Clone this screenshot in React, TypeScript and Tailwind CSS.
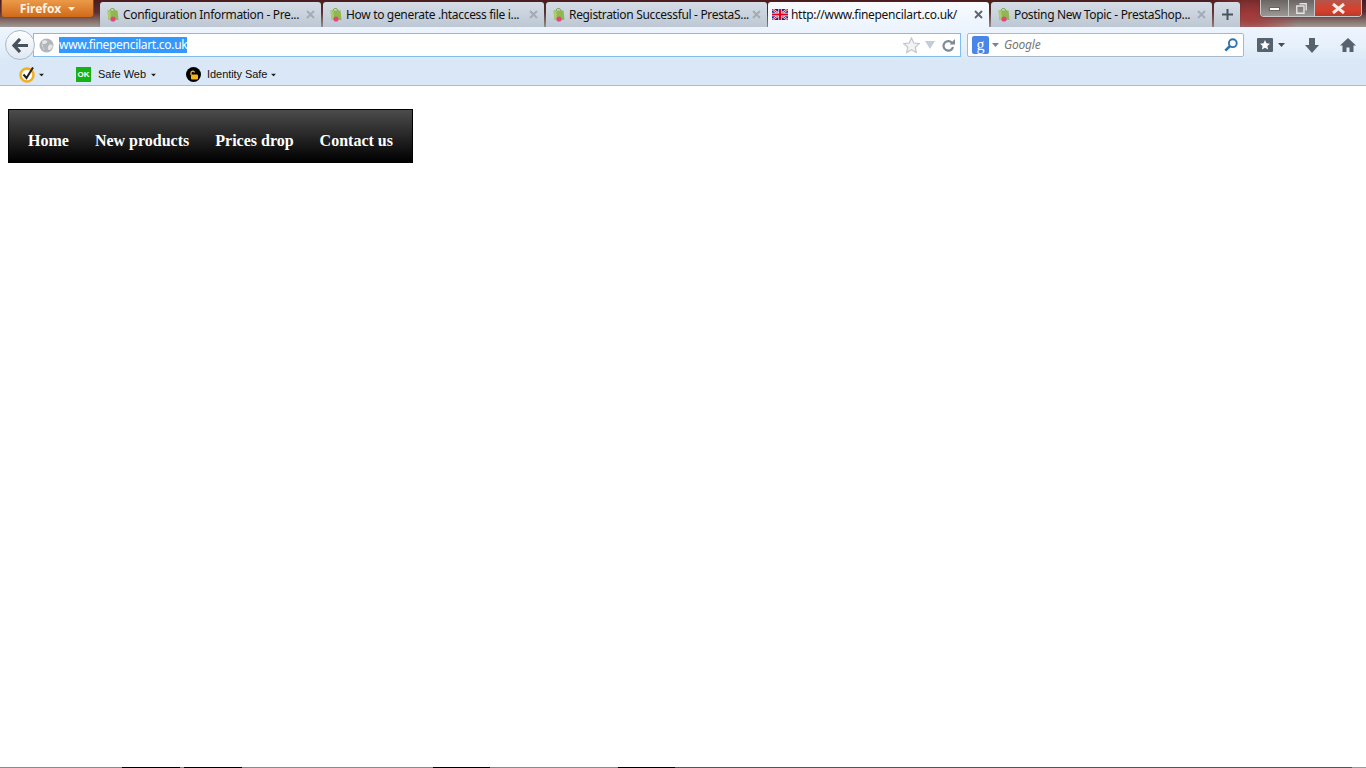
const uiFont = "font-['Noto_Sans',sans-serif]";

function Caret({ className = "" }: { className?: string }) {
  return (
    <svg width="7" height="4" viewBox="0 0 7 4" className={className}>
      <path d="M0 0h7L3.5 4z" fill="currentColor" />
    </svg>
  );
}

function BagIcon() {
  return (
    <svg width="13" height="15" viewBox="0 0 13 15" className="shrink-0">
      <path d="M4 4C4 .8 8.500 .5 9 4" fill="none" stroke="#6f9a3a" strokeWidth="1" />
      <path d="M1.500 3.500h10l1 9.500H2.500z" fill="#8fb84e" />
      <path d="M1.500 3.500h3l.5 9.500H2.500z" fill="#a9cc6c" />
      <circle cx="7" cy="12" r="2.600" fill="#e0457e" />
    </svg>
  );
}

function UkFlag() {
  return (
    <svg width="16" height="11" viewBox="0 0 16 11" className="shrink-0">
      <rect width="16" height="11" fill="#20208a" />
      <path d="M0 0 16 11M16 0 0 11" stroke="#fff" strokeWidth="2.200" />
      <path d="M0 0 16 11M16 0 0 11" stroke="#e0001c" strokeWidth="1" />
      <path d="M8 0v11M0 5.500h16" stroke="#fff" strokeWidth="3.400" />
      <path d="M8 0v11M0 5.500h16" stroke="#e0001c" strokeWidth="2.200" />
    </svg>
  );
}

function CloseX({ active }: { active?: boolean }) {
  return (
    <svg width="9" height="9" viewBox="0 0 9 9" className="shrink-0">
      <path d="M1 1l7 7M8 1 1 8" stroke={active ? "#5f666e" : "#a3abb5"} strokeWidth="1.900" />
    </svg>
  );
}

const tabs = [
  { title: "Configuration Information - Pre..." },
  { title: "How to generate .htaccess file i..." },
  { title: "Registration Successful - PrestaS..." },
  { title: "http://www.finepencilart.co.uk/", active: true },
  { title: "Posting New Topic - PrestaShop..." },
];

function Tab({ title, active }: { title: string; active?: boolean }) {
  if (active) {
    return (
      <div className="-ml-px flex h-[25px] w-[221px] items-center rounded-t-[3px] bg-[linear-gradient(#f9fbfe,#ecf4fe)] pl-[4px] pr-[6px] shadow-[0_0_1px_#333]">
        <UkFlag />
        <span className="ml-[3px] flex-1 whitespace-nowrap text-[12px] tracking-[-0.3px] text-[#111]">{title}</span>
        <CloseX active />
      </div>
    );
  }
  return (
    <div className="flex h-[25px] w-[221px] items-center rounded-t-[3px] bg-[linear-gradient(#d5dde6,#bdc8d4)] pl-[6px] pr-[6px] shadow-[0_0_1px_#333]">
      <BagIcon />
      <span className="ml-[4px] flex-1 whitespace-nowrap text-[12px] tracking-[-0.33px] text-[#111]">{title}</span>
      <CloseX />
    </div>
  );
}

function TitleBar() {
  return (
    <div className="flex h-[27px] bg-[radial-gradient(ellipse_50px_30px_at_1250px_16px,#a53a3a,transparent),linear-gradient(#4c1c1e_0%,#5c3032_45%,#a09a94_100%)]">
      <div className="ml-px flex h-[18px] w-[93px] items-center justify-center gap-[7px] rounded-b-[3px] border border-t-0 border-[#8a4a1a] bg-[linear-gradient(#eb9a4a,#d06a18)]">
        <span className="text-[12px] font-bold leading-none text-[#fdf3e6]">Firefox</span>
        <Caret className="text-[#fdf3e6]" />
      </div>
      <div className="ml-[6px] mt-[2px] flex gap-[2px]">
        {tabs.map((t) => (
          <Tab key={t.title} title={t.title} active={t.active} />
        ))}
        <div className="flex h-[25px] w-[26px] items-center justify-center rounded-t-[3px] bg-[linear-gradient(#d5dde6,#bdc8d4)] shadow-[0_0_1px_#333]">
          <svg width="11" height="11" viewBox="0 0 11 11">
            <path d="M5.500 0v11M0 5.500h11" stroke="#4a545e" strokeWidth="2" />
          </svg>
        </div>
      </div>
      <div className="ml-auto mr-[4px] flex h-[17px] w-[102px] overflow-hidden rounded-b-[4px] border border-t-0 border-[#c8c8c8] shadow-[0_0_1px_#222]">
        <div className="flex w-[28px] items-center justify-center border-r border-[#c8c8c8] bg-[linear-gradient(#6a6462,#9c9896)]">
          <div className="mt-[2px] h-[4px] w-[11px] border border-[#666] bg-white" />
        </div>
        <div className="flex w-[26px] items-center justify-center border-r border-[#c8c8c8] bg-[linear-gradient(#6a6462,#9c9896)]">
          <svg width="11" height="11" viewBox="0 0 11 11">
            <path d="M3.500 .8h6.700v6.700M.8 3h7.200v7.200H.8z" fill="none" stroke="#e4e4e4" strokeWidth="1.400" />
          </svg>
        </div>
        <div className="flex flex-1 items-center justify-center bg-[linear-gradient(#b4554c,#d8402a_60%,#b83a2c)]">
          <svg width="15" height="11" viewBox="0 0 15 11">
            <path d="M2 1l11 9M13 1 2 10" stroke="#f4ece8" strokeWidth="3" />
          </svg>
        </div>
      </div>
    </div>
  );
}

function NavBar() {
  return (
    <div className="flex h-[33px] items-center pr-[10px] pt-[3px]">
      <div className="relative z-10 ml-[5px] flex h-[30px] w-[30px] shrink-0 items-center justify-center rounded-full border border-[#a9b8c9] bg-[linear-gradient(#fdfeff,#e0e8f2)]">
        <svg width="17" height="15" viewBox="0 0 17 15">
          <path d="M8 1 2 7.500 8 14M2.500 7.500H16" fill="none" stroke="#48525c" strokeWidth="3.200" />
        </svg>
      </div>
      <div className="-ml-[2px] flex h-[24px] w-[928px] items-center border border-[#7fbcef] bg-white pl-[5px] pr-[5px]">
        <svg width="15" height="15" viewBox="0 0 15 15" className="shrink-0">
          <circle cx="7.500" cy="7.500" r="7" fill="#b2b6ba" />
          <path d="M3 3c2-1 4-1 5 0s-1 3-3 3-3 2-1 3 1 3 1 4M10 7c2-1 3 0 4 1-1 2-2 4-4 4s-1-4 0-5z" fill="#e4e6e8" />
        </svg>
        <span className="ml-[5px] flex h-[16px] items-center bg-[#3399ff] text-[12px] leading-none tracking-[-0.3px] text-white">
          www.finepencilart.co.uk
        </span>
        <svg width="17" height="17" viewBox="0 0 17 17" className="ml-auto shrink-0 translate-x-px">
          <path d="M8.500 1l2.300 5 5.400.6-4 3.600 1.100 5.400-4.800-2.800-4.800 2.800 1.100-5.400-4-3.600 5.400-.6z" fill="#f1f3f5" stroke="#c2c7cc" strokeWidth="1.200" />
        </svg>
        <svg width="10" height="8" viewBox="0 0 10 8" className="ml-[6px] shrink-0">
          <path d="M0 0h10L5 8z" fill="#c4ccd4" />
        </svg>
        <svg width="13" height="13" viewBox="0 0 13 13" className="ml-[7px] shrink-0">
          <path d="M10.500 4.500A4.800 4.800 0 1 0 11 8" fill="none" stroke="#7d8a96" strokeWidth="2.200" />
          <path d="M7.500 5.500H13V0z" fill="#7d8a96" />
        </svg>
      </div>
      <div className="ml-[6px] flex h-[24px] w-[277px] items-center rounded-[2px] border border-[#a8b8ca] bg-white pl-[4px] pr-[5px]">
        <div className="flex h-[18px] w-[17px] shrink-0 items-center justify-center rounded-[2px] bg-[#4a86e8] font-['Liberation_Serif',serif] text-[16px] leading-none text-white">
          g
        </div>
        <Caret className="ml-[3px] text-[#7a848e]" />
        <span className="ml-[5px] flex-1 text-[12px] italic tracking-[-0.2px] text-[#777]">Google</span>
        <svg width="14" height="14" viewBox="0 0 14 14" className="shrink-0">
          <circle cx="8.800" cy="5.200" r="3.900" fill="none" stroke="#2f74ad" strokeWidth="1.900" />
          <path d="M6 8 1.300 12.700" stroke="#2f74ad" strokeWidth="2.600" />
        </svg>
      </div>
      <div className="ml-[13px] flex items-center">
        <div className="flex h-[14px] w-[16px] items-center justify-center rounded-[1px] bg-[#56626e]">
          <svg width="10" height="10" viewBox="0 0 10 10">
            <path d="M5 0l1.500 3.300 3.500.4-2.600 2.400.7 3.500L5 7.800 1.900 9.600l.7-3.500L0 3.700l3.500-.4z" fill="#fff" />
          </svg>
        </div>
        <Caret className="ml-[5px] text-[#444c54]" />
      </div>
      <svg width="14" height="15" viewBox="0 0 14 15" className="ml-[20px] shrink-0">
        <path d="M4 0h6v7h4l-7 8-7-8h4z" fill="#56626e" />
      </svg>
      <svg width="16" height="14" viewBox="0 0 16 14" className="ml-[21px] shrink-0">
        <path d="M8 0 0 7.500h2.500V14h4v-4.500h3V14h4V7.500H16z" fill="#56626e" />
      </svg>
    </div>
  );
}

function NortonBar() {
  return (
    <div className="flex h-[25px] items-center pt-[4px] font-['Liberation_Sans',sans-serif] text-[11px] text-[#111]">
      <svg width="17" height="17" viewBox="0 0 17 17" className="ml-[19px] shrink-0">
        <circle cx="8" cy="9" r="6.500" fill="#fff" stroke="#f2b01e" strokeWidth="2.600" />
        <path d="M4.500 8.500 7.500 12 14 1.500" fill="none" stroke="#222" strokeWidth="2" />
      </svg>
      <Caret className="ml-[2px] scale-75 text-[#222]" />
      <div className="ml-[31px] flex h-[15px] w-[15px] items-center justify-center bg-[#12b312] text-[8px] font-bold leading-none text-white">
        OK
      </div>
      <span className="ml-[7px]">Safe Web</span>
      <Caret className="ml-[4px] scale-75 text-[#222]" />
      <div className="ml-[29px] flex h-[15px] w-[15px] items-center justify-center rounded-full bg-black">
        <svg width="11" height="10" viewBox="0 0 11 10">
          <path d="M3 5V3c0-2 3-2.500 3.500-.5" fill="none" stroke="#f4b41a" strokeWidth="1.300" />
          <rect x="3" y="4.500" width="7" height="5" rx="1" fill="#f4b41a" />
        </svg>
      </div>
      <span className="ml-[6px] tracking-[-0.08px]">Identity Safe</span>
      <Caret className="ml-[3px] scale-75 text-[#222]" />
    </div>
  );
}

const menu = ["Home", "New products", "Prices drop", "Contact us"];

const taskbar = [
  { w: "w-[122px]", c: "bg-[#8a8a8a]" },
  { w: "w-[58px]", c: "bg-black" },
  { w: "w-[4px]", c: "bg-[#8a8a8a]" },
  { w: "w-[58px]", c: "bg-black" },
  { w: "w-[191px]", c: "bg-[#8a8a8a]" },
  { w: "w-[57px]", c: "bg-black" },
  { w: "w-[128px]", c: "bg-[#8a8a8a]" },
  { w: "w-[57px]", c: "bg-black" },
  { w: "flex-1", c: "bg-[#555]" },
  { w: "w-[14px]", c: "bg-[#999]" },
];

export default function App() {
  return (
    <div className={`flex h-[768px] w-[1366px] flex-col overflow-hidden bg-white ${uiFont}`}>
      <TitleBar />
      <div className="bg-[linear-gradient(#edf4fe_0%,#e6f0fb_35%,#d9e7f6_60%,#d9e7f6_100%)]">
        <NavBar />
        <NortonBar />
      </div>
      <div className="h-px bg-[#aebbc9]" />
      <div className="flex-1 px-[8px] pt-[23px]">
        <ul className="flex h-[54px] w-[405px] items-center gap-[26px] border border-black bg-[linear-gradient(#4c4c4c,#000)] pl-[19px] pt-[9px] font-['Liberation_Serif',serif] text-[16px] font-bold text-white">
          {menu.map((m) => (
            <li key={m}>{m}</li>
          ))}
        </ul>
      </div>
      <div className="flex h-px">
        {taskbar.map((s, i) => (
          <div key={i} className={`${s.w} ${s.c}`} />
        ))}
      </div>
    </div>
  );
}
